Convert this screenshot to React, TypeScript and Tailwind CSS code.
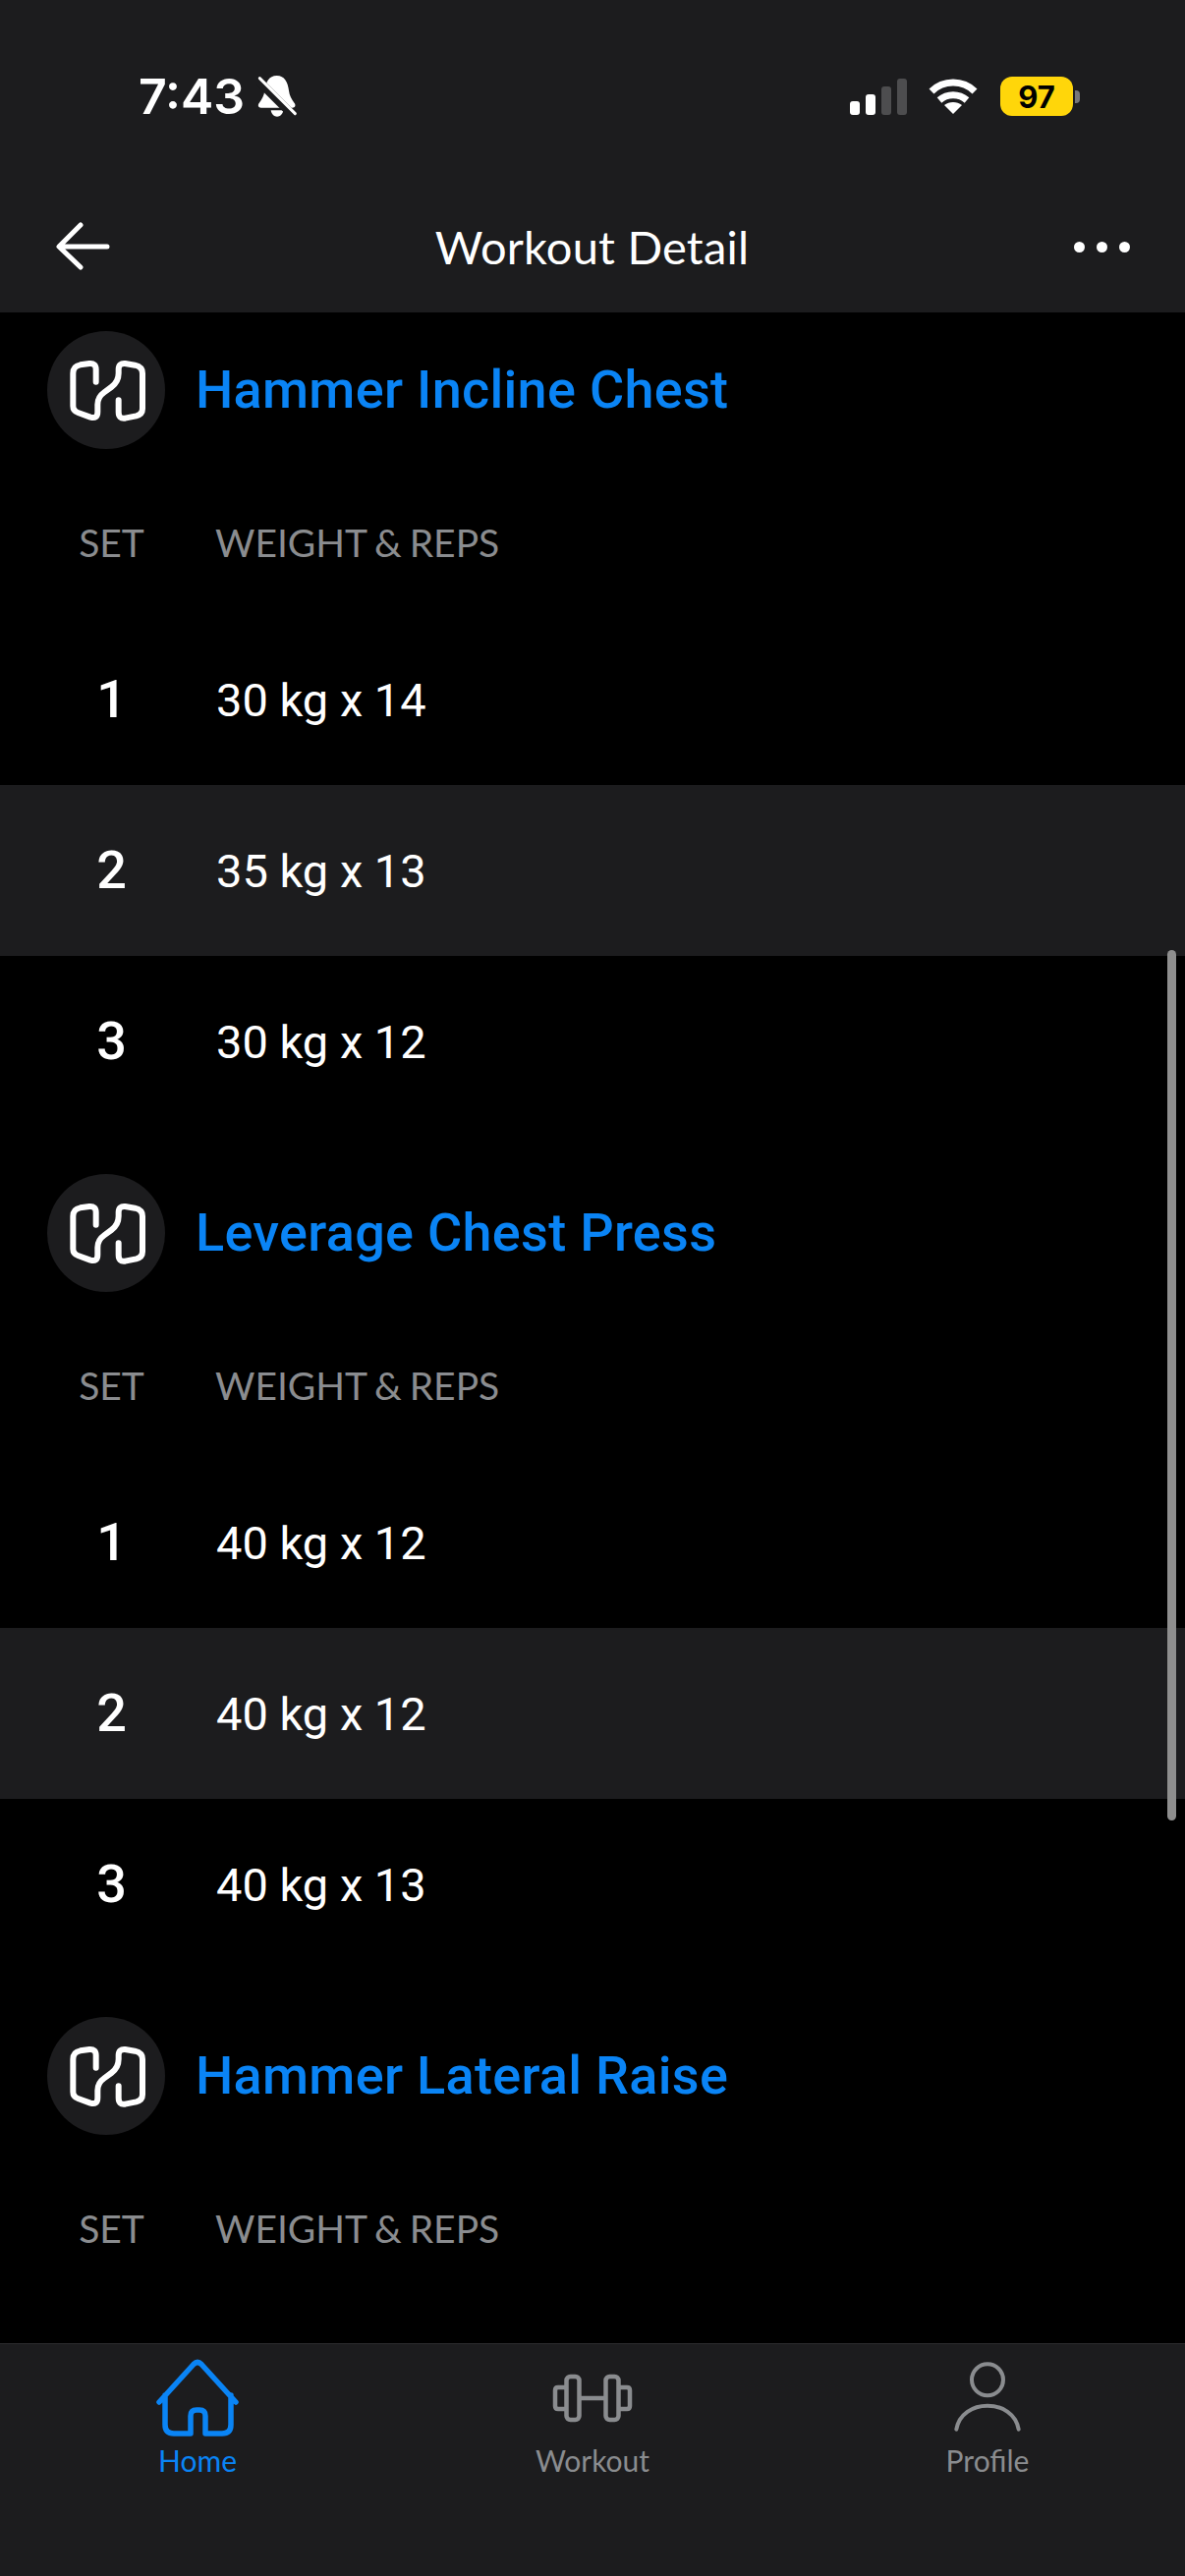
const exercises = [
  { name: 'Hammer Incline Chest', sets: ['30 kg x 14', '35 kg x 13', '30 kg x 12'] },
  { name: 'Leverage Chest Press', sets: ['40 kg x 12', '40 kg x 12', '40 kg x 13'] },
  { name: 'Hammer Lateral Raise', sets: [] as string[] },
];

function StatusBar() {
  return (
    <div className="h-[196px] flex items-center justify-between pl-[141px] pr-[107px] font-['Inter',sans-serif]">
      <div className="flex items-center gap-[12px]">
        <span className="text-[50px] leading-none font-semibold text-white">7:43</span>
        <svg width="44" height="46" viewBox="478 76 132 138">
          <path fill="#fff" d="M540 82c-24 0-34 20-37 46-2 16-8 26-17 38-5 7-2 14 6 14h96c8 0 11-7 6-14-9-12-15-22-17-38-3-26-13-46-37-46z" />
          <path fill="#fff" d="M522 188h38c-2 12-10 19-19 19s-17-7-19-19z" />
          <path stroke="#1c1c1e" strokeWidth="26" d="M478 92l120 120" />
          <path stroke="#fff" strokeWidth="9" strokeLinecap="round" d="M488 90l108 108" />
        </svg>
      </div>
      <div className="flex items-center">
        <div className="flex items-end gap-[6px] h-[37px] mr-[22px]">
          <div className="w-[10px] h-[14px] rounded-[3px] bg-white" />
          <div className="w-[10px] h-[21px] rounded-[3px] bg-white" />
          <div className="w-[10px] h-[29px] rounded-[3px] bg-[#4d4d4f]" />
          <div className="w-[10px] h-[37px] rounded-[3px] bg-[#4d4d4f]" />
        </div>
        <svg width="50" height="38" viewBox="0 0 50 38" className="mr-[23px]">
          <path fill="none" stroke="#fff" strokeWidth="7" d="M3 14c12-12 32-12 44 0" />
          <path fill="none" stroke="#fff" strokeWidth="7" d="M11 23c8-7 20-7 28 0" />
          <path fill="#fff" d="M25 37l-9-9c5-4 13-4 18 0z" />
        </svg>
        <div className="w-[74px] h-[40px] rounded-[12px] bg-[#ffd60a] flex items-center justify-center text-[31px] leading-none font-bold text-black">
          97
        </div>
        <div className="w-[5px] h-[13px] ml-[2px] rounded-r-[4px] bg-[#77777a]" />
      </div>
    </div>
  );
}

function NavBar() {
  return (
    <div className="h-[122px] pb-[12px] flex items-center justify-between pl-[54px] pr-[56px] bg-[#1c1c1e]">
      <svg width="58" height="50" viewBox="0 0 58 50" fill="none" stroke="#fff" strokeWidth="5" strokeLinecap="round" strokeLinejoin="round">
        <path d="M28 3L6 25l22 21M7 25h48" />
      </svg>
      <span className="text-[47px] leading-none text-white font-['Lato',sans-serif] tracking-[0.2px]">Workout Detail</span>
      <div className="flex gap-[12px]">
        <div className="w-[11px] h-[11px] rounded-full bg-white" />
        <div className="w-[11px] h-[11px] rounded-full bg-white" />
        <div className="w-[11px] h-[11px] rounded-full bg-white" />
      </div>
    </div>
  );
}

function LogoBadge() {
  return (
    <div className="w-[120px] h-[120px] rounded-full bg-[#1c1c1e] flex items-center justify-center shrink-0">
      <svg width="120" height="120" viewBox="54 21 360 360" fill="none" stroke="#fff" strokeWidth="18" strokeLinecap="round" strokeLinejoin="round">
        <path d="M203 176V138Q203 118 183 120L155 124Q133 128 133 150V250Q133 265 148 270L186 284Q208 290 208 268V245Q208 222 228 208L250 192Q272 176 272 150V138Q272 118 292 120L322 125Q345 130 345 150V258Q345 275 326 280L292 287Q272 290 272 268V232" />
      </svg>
    </div>
  );
}

function ExerciseBlock({ name, sets }: { name: string; sets: string[] }) {
  return (
    <section className="mt-[48px] first:mt-[19px]">
      <div className="flex items-center gap-[31px] pl-[48px]">
        <LogoBadge />
        <h2 className="text-[54px] leading-none font-medium tracking-[0.3px] text-[#0a84f5] font-['Roboto',sans-serif]">{name}</h2>
      </div>
      <div className="h-[168px] pt-[22px] flex items-center text-[39px] leading-none text-[#8a8c8f] font-['Lato',sans-serif]">
        <span className="w-[219px] pl-[8px] text-center">SET</span>
        <span className="[word-spacing:-2px]">WEIGHT &amp; REPS</span>
      </div>
      {sets.map((set, i) => (
        <div key={i} className={`h-[174px] flex items-center text-white font-['Roboto',sans-serif] ${i % 2 === 1 ? 'bg-[#1c1c1e]' : ''}`}>
          <span className="w-[219px] pl-[8px] text-center text-[54px] leading-none font-medium">{i + 1}</span>
          <span className="text-[47px] leading-none pl-[1px]">{set}</span>
        </div>
      ))}
    </section>
  );
}

function TabBar() {
  return (
    <div className="h-[237px] shrink-0 grid grid-cols-3 bg-[#1c1c1e] border-t border-[#2c2c2e] font-['Lato',sans-serif] text-[30px] leading-none text-[#8a8c8f]">
      <div className="flex flex-col items-center text-[#0a84f5]">
        <div className="h-[104px] pt-[14px]">
          <svg width="90" height="84" viewBox="0 0 90 84" fill="none" stroke="#0a84f5" strokeWidth="5.5" strokeLinecap="round" strokeLinejoin="round">
            <path d="M6 45L41 6.5Q45 2.5 49 6.5L84 45M12 38V68Q12 77 21 77H38V59Q38 53 44 53H47Q53 53 53 59V77H70Q79 77 79 68V38" />
          </svg>
        </div>
        <span className="-mt-[1px]">Home</span>
      </div>
      <div className="flex flex-col items-center">
        <div className="h-[104px] pt-[26px]">
          <svg width="90" height="60" viewBox="0 0 90 60" fill="none" stroke="#8a8c8f" strokeWidth="4.5" strokeLinejoin="round">
            <rect x="18.5" y="7" width="13" height="44" rx="4" />
            <rect x="58.5" y="7" width="13" height="44" rx="4" />
            <path d="M18.5 18H10Q7 18 7 21V37Q7 40 10 40H18.5M71.5 18H80Q83 18 83 21V37Q83 40 80 40H71.5M31.5 29H58.5" />
          </svg>
        </div>
        <span className="-mt-[1px]">Workout</span>
      </div>
      <div className="flex flex-col items-center">
        <div className="h-[104px] pt-[16px]">
          <svg width="76" height="78" viewBox="205 100 220 234" fill="none" stroke="#8a8c8f" strokeWidth="12" strokeLinecap="round">
            <circle cx="315" cy="161" r="48" />
            <path d="M220 312C228 265 270 240 315 240C360 240 402 265 410 312" />
          </svg>
        </div>
        <span className="-mt-[1px]">Profile</span>
      </div>
    </div>
  );
}

export default function App() {
  return (
    <div className="w-[1206px] h-[2622px] flex flex-col bg-black overflow-hidden">
      <div className="shrink-0 bg-[#1c1c1e]">
        <StatusBar />
        <NavBar />
      </div>
      <main className="relative flex-1 min-h-0 overflow-hidden">
        {exercises.map((ex) => (
          <ExerciseBlock key={ex.name} name={ex.name} sets={ex.sets} />
        ))}
        <div className="absolute left-[1188px] top-[649px] w-[9px] h-[886px] rounded-full bg-[#8e8e8e]" />
      </main>
      <TabBar />
    </div>
  );
}
